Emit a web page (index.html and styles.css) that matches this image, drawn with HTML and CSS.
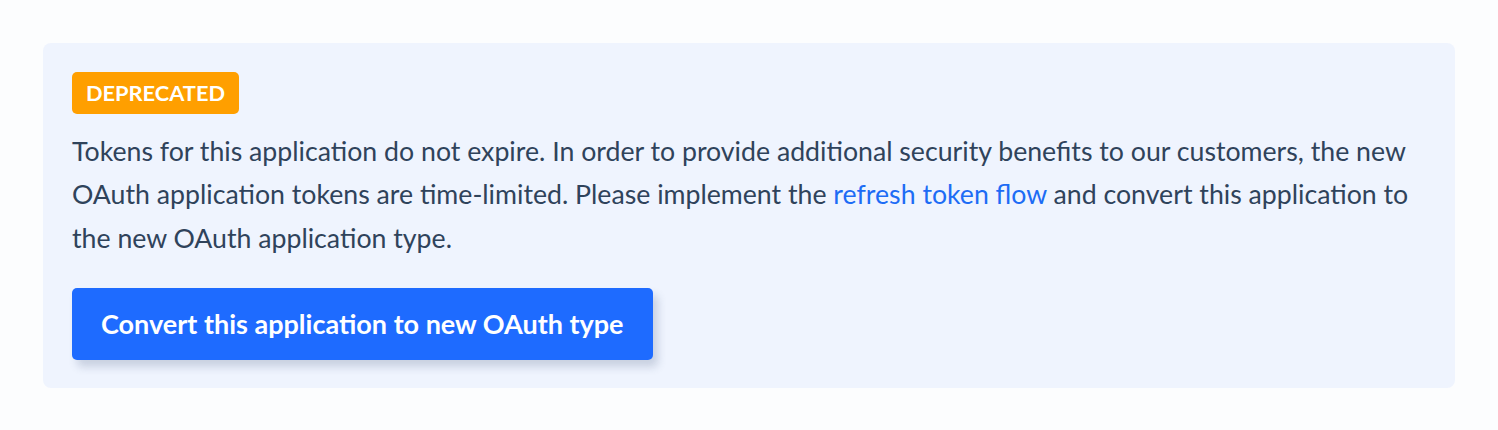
FILE: index.html
```html
<!DOCTYPE html>
<html lang="en">
<head>
<meta charset="utf-8">
<title>Deprecated application</title>
<link rel="stylesheet" href="styles.css">
</head>
<body>
<div class="page">
  <section class="notice">
    <span class="badge">Deprecated</span>
    <p class="message">Tokens for this application do not expire. In order to provide additional security benefits to our customers, the new OAuth application tokens are time-limited. Please implement the <a href="#" class="link">refresh token flow</a> and convert this application to the new OAuth application type.</p>
    <button class="btn" type="button">Convert this application to new OAuth type</button>
  </section>
</div>
</body>
</html>
```

FILE: styles.css
```css
html, body {
  margin: 0;
  padding: 0;
  background: #fcfdfe;
}
body {
  font-family: Lato, "Open Sans", sans-serif;
  color: #2f435b;
}
.page {
  padding: 43px 43px;
}
.notice {
  background: #eff4fe;
  border-radius: 8px;
  padding: 29px 29px 28px;
  display: flex;
  flex-direction: column;
  align-items: flex-start;
}
.badge {
  background: #ff9f00;
  color: #ffffff;
  font-weight: 700;
  font-size: 21.8px;
  text-transform: uppercase;
  border-radius: 5px;
  padding: 0 14px;
  height: 42px;
  line-height: 42px;
}
.message {
  margin: 16px 0 28px;
  font-size: 26.7px;
  line-height: 43.3px;
  color: #2f435b;
}
.link {
  color: #1d6cf5;
  text-decoration: none;
}
.btn {
  font-family: Lato, "Open Sans", sans-serif;
  font-weight: 700;
  font-size: 27px;
  color: #ffffff;
  background: #1e6bff;
  border: none;
  border-radius: 5px;
  padding: 0 29px;
  height: 72px;
  box-shadow: 5px 7px 8px rgba(50, 70, 110, 0.2);
  cursor: pointer;
}
```
